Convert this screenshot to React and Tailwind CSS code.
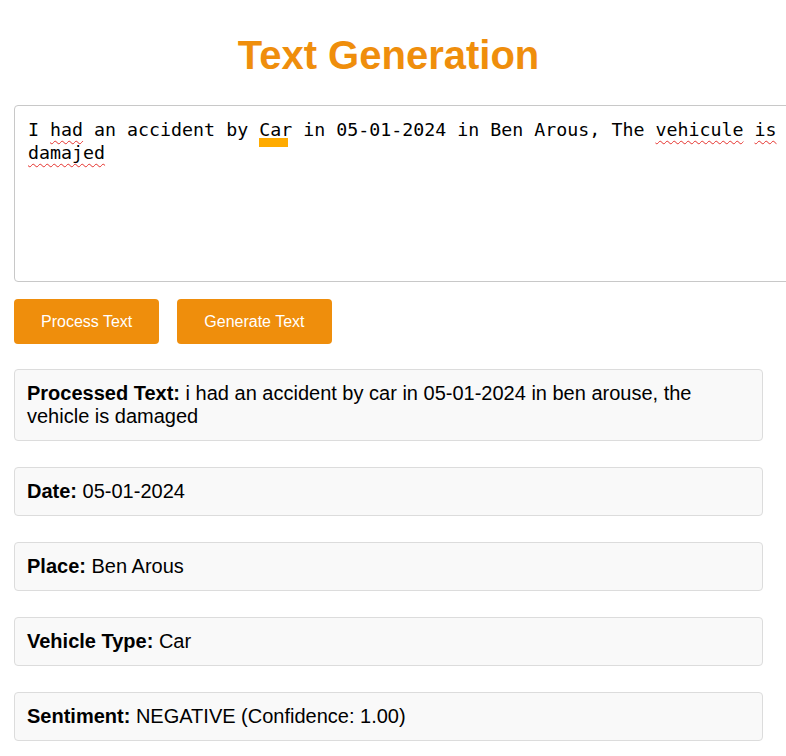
import React from 'react'

const squiggle = 'underline decoration-wavy decoration-[#e5322d] decoration-1 underline-offset-[4px]'

function Field({ label, children }) {
  return (
    <div className="rounded border border-[#dcdcdc] bg-[#f9f9f9] p-3 text-[20px] leading-[23px] text-black">
      <strong className="font-bold">{label}</strong> {children}
    </div>
  )
}

export default function App() {
  return (
    <div className="min-h-screen w-full overflow-hidden bg-white font-['Liberation_Sans',Arial,sans-serif]">
      <div className="ml-[14px] w-[749px] pt-[32px] pb-6">
        <h1 className="text-center text-[40px] font-bold leading-[46px] text-[#ef8e0c]">
          Text Generation
        </h1>

        {/* fake textarea, wider than the column like the original */}
        <div className="mt-[27px] h-[177px] w-[779px] rounded border border-[#c8c8c8] bg-white px-[13px] pt-3 font-['DejaVu_Sans_Mono',monospace] text-[18.3px] leading-[23px] text-black">
          I <span className={squiggle}>had</span> an accident by{' '}
          <span className="relative">
            Car
            <span className="absolute left-0 top-[19px] h-[9px] w-[29px] bg-[#ffab00]" />
          </span>{' '}
          in 05-01-2024 in Ben Arous, The <span className={squiggle}>vehicule</span>{' '}
          <span className={squiggle}>is</span> <span className={squiggle}>damajed</span>
        </div>

        <div className="mt-[17px] flex gap-[18px]">
          <button className="h-[45px] rounded bg-[#ef8e0c] px-[27px] text-[16px] text-white">
            Process Text
          </button>
          <button className="h-[45px] rounded bg-[#ef8e0c] px-[27px] text-[16px] text-white">
            Generate Text
          </button>
        </div>

        <div className="mt-[25px] flex flex-col gap-[26px]">
          <Field label="Processed Text:">
            i had an accident by car in 05-01-2024 in ben arouse, the vehicle is damaged
          </Field>
          <Field label="Date:">05-01-2024</Field>
          <Field label="Place:">Ben Arous</Field>
          <Field label="Vehicle Type:">Car</Field>
          <Field label="Sentiment:">NEGATIVE (Confidence: 1.00)</Field>
        </div>
      </div>
    </div>
  )
}
